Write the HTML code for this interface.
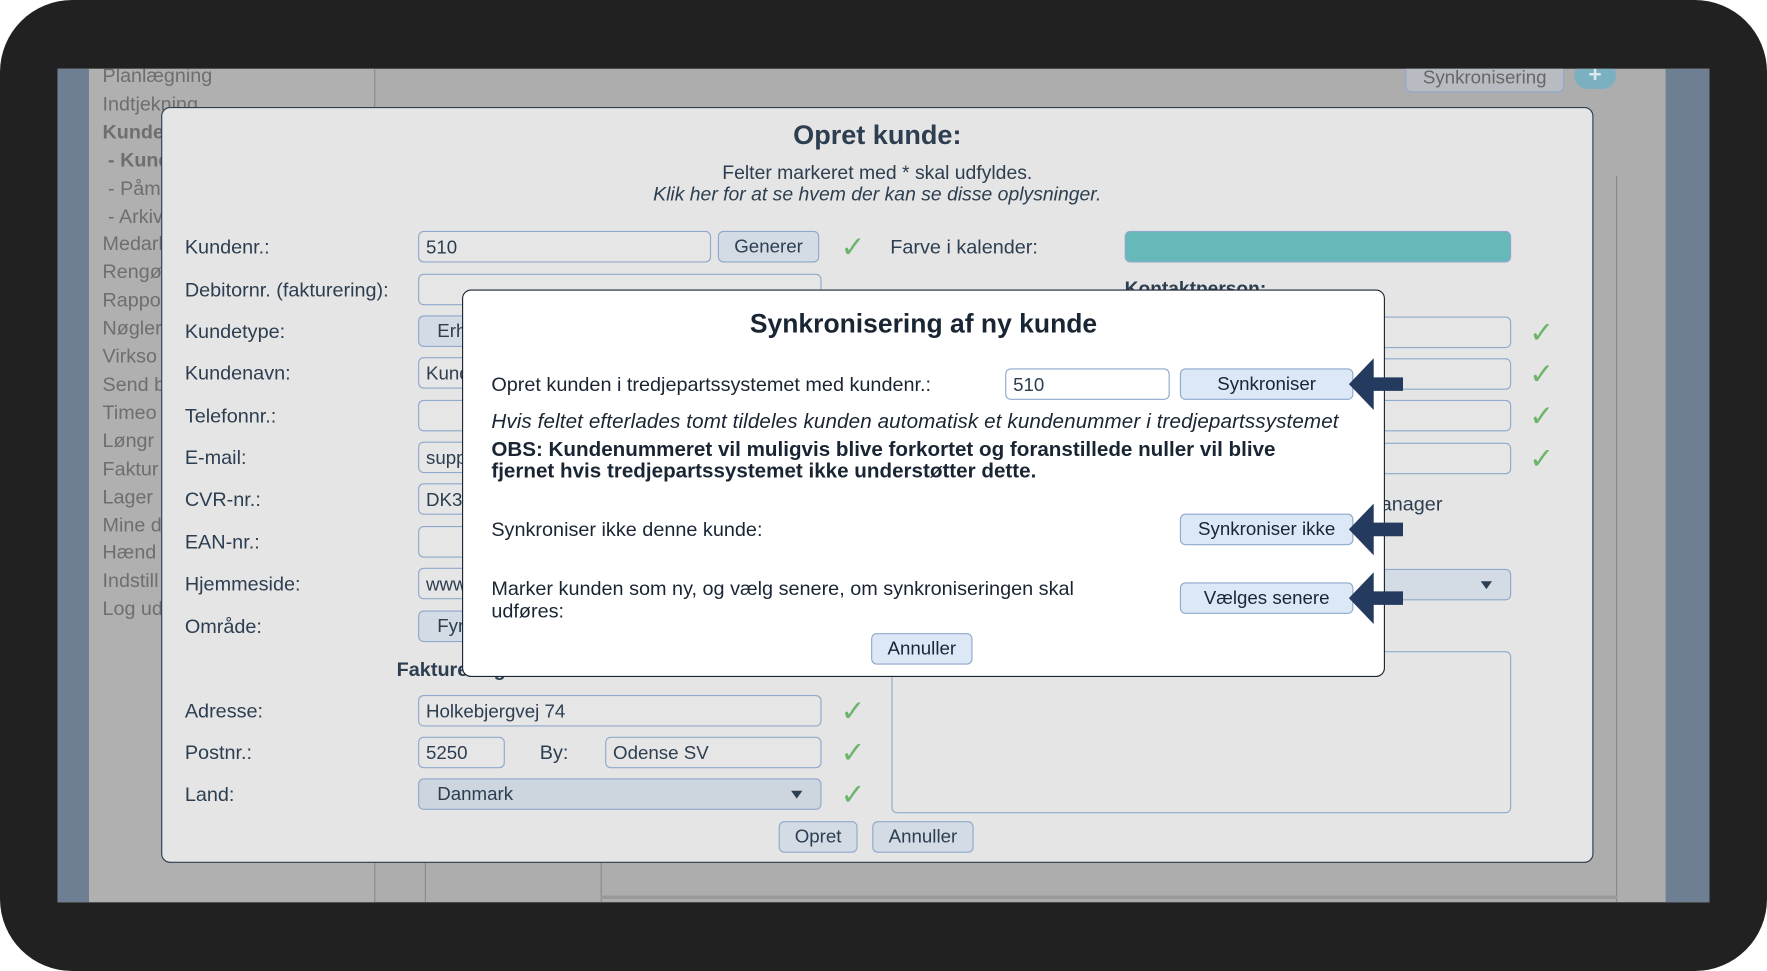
<!DOCTYPE html>
<html><head><meta charset="utf-8"><style>
*{box-sizing:border-box;margin:0;padding:0}
html,body{width:1767px;height:971px;overflow:hidden;background:#fff}
#w{position:absolute;left:0;top:0;width:1568px;height:862px;transform:scale(1.12691,1.12645);transform-origin:0 0;font-family:"Liberation Sans",sans-serif}
.a{position:absolute}
.frame{left:0;top:0;width:1568px;height:862px;background:#212121;border-radius:64px}
.scr{left:51px;top:61px;width:1466px;height:740px;background:#adadad;overflow:hidden}
.side{color:#6e6e6e;font-size:17.5px;line-height:24.9px}
.t{font-size:17.6px;color:#2c3e50;white-space:nowrap}
.inp{border:1.5px solid #8fa8cc;border-radius:5px;background:#e6e6e6;height:28px;font-size:16.6px;color:#2c3e50;padding:4px 6px;white-space:nowrap;overflow:hidden}
.btn{border:1.5px solid #8fa8cc;border-radius:5px;background:#d3dbe5;height:28px;font-size:16.6px;color:#2c3e50;text-align:center;line-height:25px;white-space:nowrap}
.bb{background:#dce8f6;color:#1a2533}
.chk{color:#6bb56b;font-size:26px;line-height:26px}
.arrow{width:50px;height:46px}
</style></head><body><div id="w">
<div class="a frame"></div>
<div class="a scr">
  <div class="a" style="left:0;top:0;width:28px;height:740px;background:#6f7f93"></div>
  <div class="a" style="left:28px;top:0;width:254px;height:740px;background:#b0b0b0;border-right:1px solid #888"></div>
  <div class="a" style="left:1427px;top:0;width:39px;height:740px;background:#6f7f93"></div>
  <div class="a" style="left:1383px;top:95px;width:1px;height:645px;background:#888"></div>
  <div class="a side" style="left:40px;top:-6px">Planlægning<br>Indtjekning<br><b>Kunder</b><br><b>&nbsp;- Kunder</b><br>&nbsp;- Påmin<br>&nbsp;- Arkiv<br>Medarb<br>Rengør<br>Rappor<br>Nøgler<br>Virkso<br>Send b<br>Timeo<br>Løngr<br>Faktur<br>Lager<br>Mine d<br>Hænd<br>Indstill<br>Log ud</div>
  <div class="a btn" style="left:1196px;top:-4px;width:141px;height:25px;background:#b8bcc2;color:#666;line-height:22px">Synkronisering</div>
  <div class="a" style="left:1346px;top:-6px;width:37px;height:24px;border-radius:12px;background:#7ab0c0;color:#d9e9ee;text-align:center;font:bold 20px/24px 'Liberation Sans'">+</div>
  <div class="a" style="left:326px;top:700px;width:1px;height:40px;background:#888"></div>
  <div class="a" style="left:482px;top:700px;width:1px;height:40px;background:#888"></div>
  <div class="a" style="left:482px;top:734px;width:902px;height:3px;background:#999"></div>
</div>
<!-- big modal -->
<div class="a" style="left:143px;top:95px;width:1271px;height:671px;background:#e5e5e5;border:1.5px solid #2c3e50;border-radius:8px"></div>
<div class="a t" style="left:143px;width:1271px;top:107px;text-align:center;font-size:24px;font-weight:bold">Opret kunde:</div>
<div class="a t" style="left:143px;width:1271px;top:143px;text-align:center;font-size:17.2px">Felter markeret med * skal udfyldes.</div>
<div class="a t" style="left:143px;width:1271px;top:162px;text-align:center;font-size:17.2px;font-style:italic">Klik her for at se hvem der kan se disse oplysninger.</div>
<div class="a t" style="left:164px;top:209px">Kundenr.:</div>
<div class="a t" style="left:164px;top:247px">Debitornr. (fakturering):</div>
<div class="a t" style="left:164px;top:284px">Kundetype:</div>
<div class="a t" style="left:164px;top:321px">Kundenavn:</div>
<div class="a t" style="left:164px;top:359px">Telefonnr.:</div>
<div class="a t" style="left:164px;top:396px">E-mail:</div>
<div class="a t" style="left:164px;top:433px">CVR-nr.:</div>
<div class="a t" style="left:164px;top:471px">EAN-nr.:</div>
<div class="a t" style="left:164px;top:508px">Hjemmeside:</div>
<div class="a t" style="left:164px;top:546px">Område:</div>
<div class="a inp" style="left:371px;top:205px;width:260px">510</div>
<div class="a btn" style="left:637px;top:205px;width:90px">Generer</div>
<div class="a chk" style="left:746px;top:206px">✓</div>
<div class="a t" style="left:790px;top:209px">Farve i kalender:</div>
<div class="a" style="left:998px;top:205px;width:343px;height:28px;background:#67b9b9;border:1.5px solid #8fa8cc;border-radius:5px"></div>
<div class="a inp" style="left:371px;top:243px;width:358px"></div>
<div class="a btn" style="left:371px;top:280px;width:358px;text-align:left;padding-left:16px">Erhverv</div>
<div class="a inp" style="left:371px;top:317px;width:358px">Kunde</div>
<div class="a inp" style="left:371px;top:355px;width:358px"></div>
<div class="a inp" style="left:371px;top:392px;width:358px">support</div>
<div class="a inp" style="left:371px;top:429px;width:358px">DK3</div>
<div class="a inp" style="left:371px;top:467px;width:358px"></div>
<div class="a inp" style="left:371px;top:504px;width:358px">www</div>
<div class="a btn" style="left:371px;top:542px;width:358px;text-align:left;padding-left:16px">Fyn</div>
<div class="a t" style="left:998px;top:247px;font-weight:bold;font-size:17px">Kontaktperson:</div>
<div class="a inp" style="left:1100px;top:281px;width:241px"></div>
<div class="a inp" style="left:1100px;top:318px;width:241px"></div>
<div class="a inp" style="left:1100px;top:355px;width:241px"></div>
<div class="a inp" style="left:1100px;top:393px;width:241px"></div>
<div class="a chk" style="left:1357px;top:282px">✓</div>
<div class="a chk" style="left:1357px;top:319px">✓</div>
<div class="a chk" style="left:1357px;top:356px">✓</div>
<div class="a chk" style="left:1357px;top:394px">✓</div>
<div class="a t" style="left:1000px;width:280px;text-align:right;top:437px">Kundeansvarlig manager</div>
<div class="a btn" style="left:998px;top:505px;width:343px"></div>
<div class="a" style="left:1314px;top:516px;border:5px solid transparent;border-top:7px solid #2c3e50"></div>
<div class="a" style="left:791px;top:578px;width:550px;height:144px;border:1.5px solid #8fa8cc;border-radius:5px"></div>
<div class="a t" style="left:352px;top:584px;font-weight:bold">Fakturering</div>
<div class="a t" style="left:164px;top:621px">Adresse:</div>
<div class="a t" style="left:164px;top:658px">Postnr.:</div>
<div class="a t" style="left:164px;top:695px">Land:</div>
<div class="a inp" style="left:371px;top:617px;width:358px">Holkebjergvej 74</div>
<div class="a inp" style="left:371px;top:654px;width:77px">5250</div>
<div class="a t" style="left:479px;top:658px">By:</div>
<div class="a inp" style="left:537px;top:654px;width:192px">Odense SV</div>
<div class="a btn" style="left:371px;top:691px;width:358px;text-align:left;padding-left:16px;background:#cdd5df">Danmark</div>
<div class="a" style="left:702px;top:702px;border:5px solid transparent;border-top:7px solid #2c3e50"></div>
<div class="a chk" style="left:746px;top:618px">✓</div>
<div class="a chk" style="left:746px;top:655px">✓</div>
<div class="a chk" style="left:746px;top:692px">✓</div>
<div class="a btn" style="left:691px;top:729px;width:70px">Opret</div>
<div class="a btn" style="left:774px;top:729px;width:90px">Annuller</div>
<!-- sync modal -->
<div class="a" style="left:410px;top:257px;width:819px;height:344px;background:#fff;border:1.5px solid #1a2533;border-radius:8px"></div>
<div class="a t" style="left:410px;width:819px;top:274px;text-align:center;font-size:23.5px;font-weight:bold;color:#1a2533">Synkronisering af ny kunde</div>
<div class="a t" style="left:436px;top:331px;color:#1a2533">Opret kunden i tredjepartssystemet med kundenr.:</div>
<div class="a inp" style="left:892px;top:327px;width:146px;background:#fff">510</div>
<div class="a btn bb" style="left:1047px;top:327px;width:154px">Synkroniser</div>
<div class="a t" style="left:436px;top:363px;font-style:italic;color:#1a2533;font-size:18.3px;letter-spacing:0.1px">Hvis feltet efterlades tomt tildeles kunden automatisk et kundenummer i tredjepartssystemet</div>
<div class="a t" style="left:436px;top:389px;font-weight:bold;color:#1a2533;line-height:19px;font-size:18.3px">OBS: Kundenummeret vil muligvis blive forkortet og foranstillede nuller vil blive<br>fjernet hvis tredjepartssystemet ikke understøtter dette.</div>
<div class="a t" style="left:436px;top:460px;color:#1a2533">Synkroniser ikke denne kunde:</div>
<div class="a btn bb" style="left:1047px;top:456px;width:154px">Synkroniser ikke</div>
<div class="a t" style="left:436px;top:512px;color:#1a2533;line-height:20px">Marker kunden som ny, og vælg senere, om synkroniseringen skal<br>udføres:</div>
<div class="a btn bb" style="left:1047px;top:517px;width:154px">Vælges senere</div>
<div class="a btn bb" style="left:773px;top:562px;width:90px">Annuller</div>
<svg class="a arrow" style="left:1197px;top:318px" viewBox="0 0 50 46"><path d="M0 23 L22 0 L22 17 L48 17 L48 29 L22 29 L22 46 Z" fill="#243a5e"/></svg>
<svg class="a arrow" style="left:1197px;top:447px" viewBox="0 0 50 46"><path d="M0 23 L22 0 L22 17 L48 17 L48 29 L22 29 L22 46 Z" fill="#243a5e"/></svg>
<svg class="a arrow" style="left:1197px;top:508px" viewBox="0 0 50 46"><path d="M0 23 L22 0 L22 17 L48 17 L48 29 L22 29 L22 46 Z" fill="#243a5e"/></svg>
</div></body></html>
